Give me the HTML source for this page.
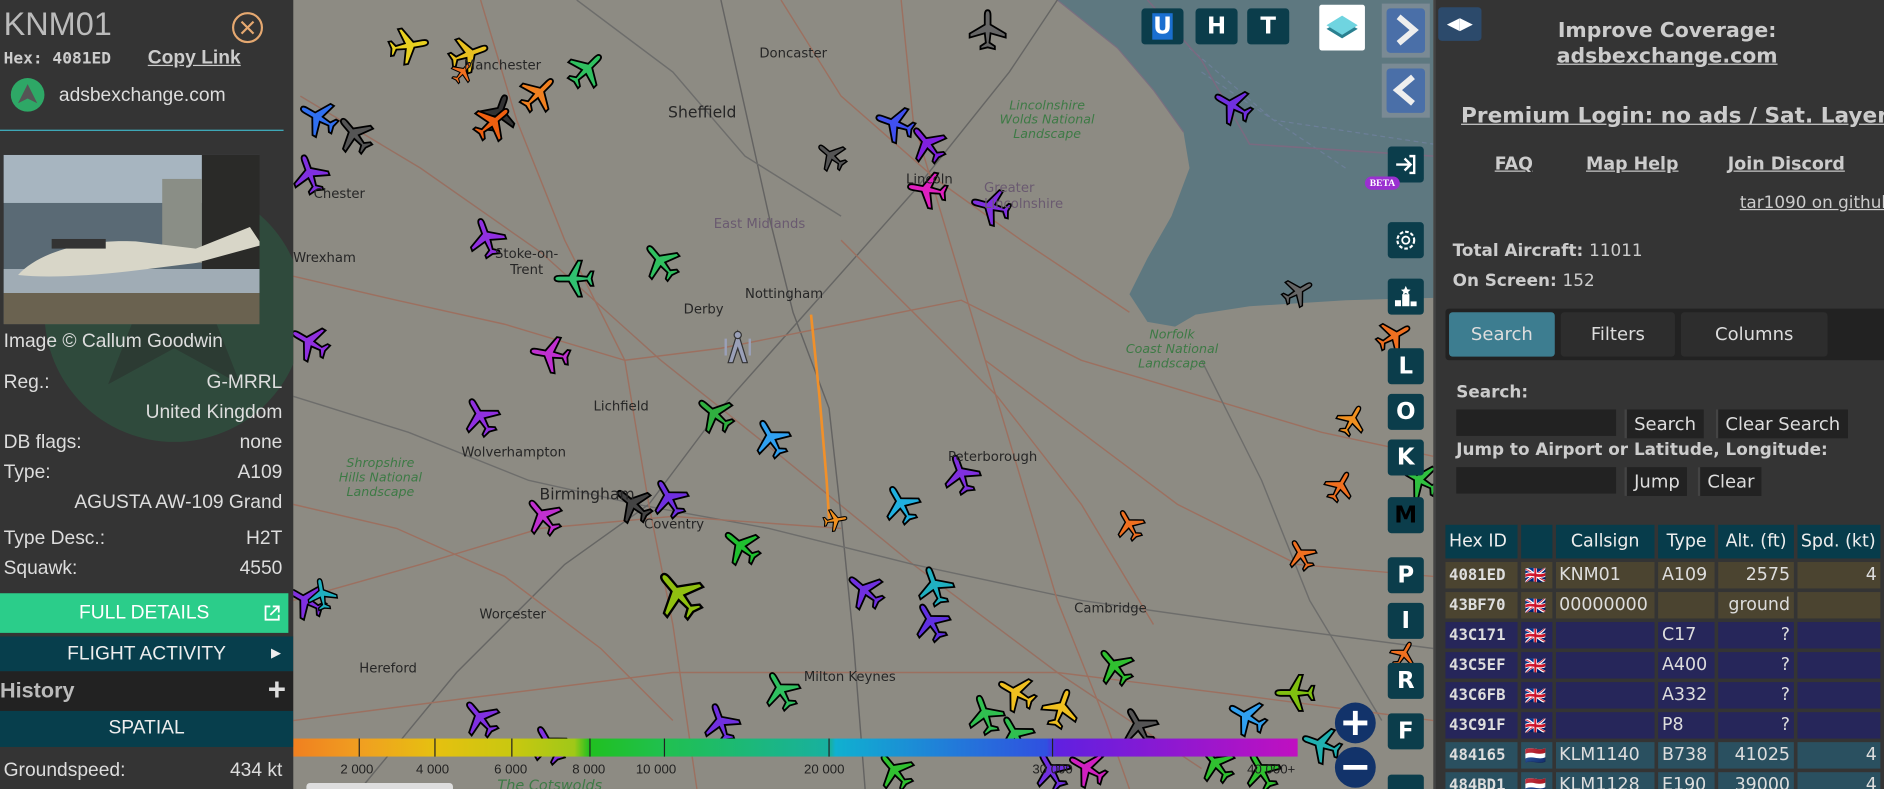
<!DOCTYPE html>
<html><head><meta charset="utf-8">
<style>
*{box-sizing:border-box;margin:0;padding:0}
html,body{width:1884px;height:789px;overflow:hidden;background:#333}
#w{position:absolute;left:0;top:0;width:1568px;height:657px;transform:scale(1.20153,1.2009);transform-origin:0 0;font-family:"Liberation Sans",Arial,sans-serif;overflow:hidden}
.abs{position:absolute}
#left{left:0;top:0;width:244px;height:657px;background:#343434;color:#ddd;overflow:hidden}
#map{left:244px;top:0;width:949px;height:657px;background:#8d8b83;overflow:hidden}
#right{left:1193px;top:0;width:375px;height:657px;background:#343434;color:#ccc;font-family:"DejaVu Sans",sans-serif;border-left:2px solid #444}
.row{position:absolute;left:3px;width:232px;font-size:16px;color:#ddd}
.row span{float:right}
.mb{position:absolute;width:30px;height:30px;background:#0b3d4b;border-radius:3px;color:#fff;font-weight:bold;font-size:19px;text-align:center;line-height:30px;font-family:"DejaVu Sans",sans-serif}
.bar{position:absolute;left:0;width:240px;color:#eee;text-align:center;font-size:16px}
.lbl{position:absolute;font-family:"DejaVu Sans",sans-serif;font-size:12px;color:#262626}
.grn{color:#3d7a45;font-style:italic;font-size:10.5px;text-align:center;line-height:12px}
table{border-collapse:separate;border-spacing:3px;font-size:14.5px;color:#ddd}
td,th{height:22px;padding:0 3px;white-space:nowrap}
th{background:#073c4b;font-weight:normal;color:#eee;height:28px}
.o td{background:#4b4430}.n td{background:#26265a}.t td{background:#2a5060}
.mono{font-family:"DejaVu Sans Mono",monospace;font-weight:bold;font-size:13px}
.btn{position:absolute;background:#222;color:#ddd;font-size:15px;height:24px;line-height:24px;padding:0 6px;border-left:2px solid #444}
.inp{position:absolute;background:#222;height:22px;width:133px}
</style></head><body><div id="w">

<!-- MAP -->
<div id="map" class="abs">
<svg width="949" height="657" viewBox="244 0 949 657" style="position:absolute;left:0;top:0">
<defs>
<g id="pl"><path transform="scale(1.5)" d="M12 1C13 1 13.6 2 13.6 4L13.6 9L22 14L22 16.2L13.6 13.8L13 19L16 21L16 22.6L12 21.6L8 22.6L8 21L11 19L10.4 13.8L2 16.2L2 14L10.4 9L10.4 4C10.4 2 11 1 12 1Z" stroke="#000" stroke-width="1"/></g>
</defs>
<path d="M880 0L1193 0L1193 248L1120 250L1040 255L995 262L978 272L955 268L940 245L955 215L975 180L990 140L985 110L960 75L930 40Z" fill="#5e7880"/>
<path d="M880 0L930 40L960 75L985 110" stroke="#7a6f80" fill="none" stroke-width="1"/>
<path d="M990 40L1060 100L1193 120M1000 60L1120 140" stroke="#6c7f98" fill="none" stroke-dasharray="4 3" stroke-width="1"/>
<path d="M955 0L1000 50L1040 120L1193 130" stroke="#7a6a80" fill="none" stroke-width="1.3"/>
<g fill="none" stroke-width="1.2" opacity=".8">
<path d="M250 80L350 140L450 210L550 300L650 380L760 470L880 560L1000 640" stroke="#9a6a5a"/>
<path d="M600 0L620 90L640 180L660 260L690 340L700 430L710 530L720 657" stroke="#5a5a5a"/>
<path d="M244 330L340 360L440 400L530 420L640 440L760 470L900 500L1040 520L1193 540" stroke="#666"/>
<path d="M300 657L380 560L470 470L540 420L600 340L680 250L760 160L840 60L880 0" stroke="#5d5d5d"/>
<path d="M244 230L330 250L420 270L520 300L600 290L700 270L800 250L900 300L1000 330L1100 360L1193 380" stroke="#a06a58"/>
<path d="M400 0L430 100L470 200L520 300L540 420L560 520L580 657" stroke="#a06a58"/>
<path d="M750 0L760 100L790 200L820 300L850 400L880 500L920 600L940 657" stroke="#a06a58"/>
<path d="M1000 300L1050 400L1090 500L1150 600" stroke="#666"/>
<path d="M244 500L350 470L450 440L560 430L700 440" stroke="#a06a58"/>
<path d="M650 0L700 80L780 150L850 200L940 260" stroke="#a06a58"/>
<path d="M244 600L400 580L560 560L720 560L880 560L1040 580L1193 600" stroke="#a06a58"/>
<path d="M480 0L560 60L620 130L700 180" stroke="#666"/>
<path d="M244 420L330 440L420 480L500 540L560 600" stroke="#a06a58"/>
<path d="M820 300L900 360L980 420L1080 470L1193 480" stroke="#a06a58"/>
<path d="M700 200L760 260L830 330L900 420L960 520" stroke="#a06a58"/>
</g>
<path d="M675 262L682 330L688 400L690 432" stroke="#f0902a" stroke-width="2.2" fill="none"/>
<!-- planes -->
<g>
<use href="#pl" fill="#e8d020" transform="translate(340,38) rotate(80) translate(-18,-18)"/>
<use href="#pl" fill="#e8c020" transform="translate(390,45) rotate(70) translate(-18,-18)"/>
<use href="#pl" fill="#f07020" transform="translate(385,60) rotate(40) scale(.6) translate(-18,-18)"/>
<use href="#pl" fill="#30c060" transform="translate(488,58) rotate(45) translate(-18,-18)"/>
<use href="#pl" fill="#f08020" transform="translate(448,78) rotate(45) translate(-18,-18)"/>
<use href="#pl" fill="#333" transform="translate(415,95) rotate(20) translate(-18,-18)"/>
<use href="#pl" fill="#f06010" transform="translate(410,102) rotate(50) translate(-18,-18)"/>
<use href="#pl" fill="#3070f0" transform="translate(265,98) rotate(-60) translate(-18,-18)"/>
<use href="#pl" fill="#555" transform="translate(295,112) rotate(-40) translate(-18,-18)"/>
<use href="#pl" fill="#8030e0" transform="translate(258,145) rotate(-20) translate(-18,-18)"/>
<use href="#pl" fill="#666" transform="translate(822,25) rotate(0) translate(-18,-18)"/>
<use href="#pl" fill="#7030e0" transform="translate(1026,88) rotate(-60) translate(-18,-18)"/>
<use href="#pl" fill="#4050f0" transform="translate(745,103) rotate(-70) translate(-18,-18)"/>
<use href="#pl" fill="#8020e0" transform="translate(772,120) rotate(-40) translate(-18,-18)"/>
<use href="#pl" fill="#555" transform="translate(692,130) rotate(-50) scale(.8) translate(-18,-18)"/>
<use href="#pl" fill="#e020c0" transform="translate(772,158) rotate(-80) translate(-18,-18)"/>
<use href="#pl" fill="#8030e0" transform="translate(825,172) rotate(-75) translate(-18,-18)"/>
<use href="#pl" fill="#9030e0" transform="translate(405,198) rotate(-20) translate(-18,-18)"/>
<use href="#pl" fill="#30c060" transform="translate(550,218) rotate(-40) translate(-18,-18)"/>
<use href="#pl" fill="#30c070" transform="translate(478,232) rotate(-90) translate(-18,-18)"/>
<use href="#pl" fill="#666" transform="translate(1080,243) rotate(60) scale(.8) translate(-18,-18)"/>
<use href="#pl" fill="#f07020" transform="translate(1160,280) rotate(60) scale(.9) translate(-18,-18)"/>
<use href="#pl" fill="#9030e0" transform="translate(258,285) rotate(-60) translate(-18,-18)"/>
<use href="#pl" fill="#c030d0" transform="translate(458,295) rotate(-80) translate(-18,-18)"/>
<use href="#pl" fill="#9030e0" transform="translate(400,347) rotate(-30) translate(-18,-18)"/>
<use href="#pl" fill="#30b040" transform="translate(595,345) rotate(-50) translate(-18,-18)"/>
<use href="#pl" fill="#30a0f0" transform="translate(642,365) rotate(-30) translate(-18,-18)"/>
<use href="#pl" fill="#8030e0" transform="translate(800,395) rotate(-20) translate(-18,-18)"/>
<use href="#pl" fill="#f09020" transform="translate(1125,350) rotate(30) scale(.8) translate(-18,-18)"/>
<use href="#pl" fill="#f07020" transform="translate(1115,405) rotate(30) scale(.8) translate(-18,-18)"/>
<use href="#pl" fill="#30c040" transform="translate(1182,400) rotate(-60) translate(-18,-18)"/>
<use href="#pl" fill="#f07020" transform="translate(940,437) rotate(-30) scale(.8) translate(-18,-18)"/>
<use href="#pl" fill="#f07020" transform="translate(1083,462) rotate(-30) scale(.8) translate(-18,-18)"/>
<use href="#pl" fill="#444" transform="translate(527,420) rotate(-50) translate(-18,-18)"/>
<use href="#pl" fill="#7030e0" transform="translate(557,415) rotate(-30) translate(-18,-18)"/>
<use href="#pl" fill="#c030d0" transform="translate(452,430) rotate(-40) translate(-18,-18)"/>
<use href="#pl" fill="#20b0e0" transform="translate(750,420) rotate(-30) translate(-18,-18)"/>
<use href="#pl" fill="#f09020" transform="translate(695,433) rotate(80) scale(.6) translate(-18,-18)"/>
<use href="#pl" fill="#20c030" transform="translate(617,455) rotate(-50) translate(-18,-18)"/>
<use href="#pl" fill="#90c010" transform="translate(565,495) rotate(-40) scale(1.3) translate(-18,-18)"/>
<use href="#pl" fill="#7030e0" transform="translate(720,492) rotate(-50) translate(-18,-18)"/>
<use href="#pl" fill="#20b0c0" transform="translate(778,488) rotate(-20) translate(-18,-18)"/>
<use href="#pl" fill="#6030e0" transform="translate(775,518) rotate(-30) translate(-18,-18)"/>
<use href="#pl" fill="#8030e0" transform="translate(255,500) rotate(-60) translate(-18,-18)"/>
<use href="#pl" fill="#20b0c0" transform="translate(268,495) rotate(-10) scale(.8) translate(-18,-18)"/>
<use href="#pl" fill="#30c030" transform="translate(928,555) rotate(-40) translate(-18,-18)"/>
<use href="#pl" fill="#f07020" transform="translate(1168,545) rotate(30) scale(.7) translate(-18,-18)"/>
<use href="#pl" fill="#80c010" transform="translate(1078,577) rotate(-90) translate(-18,-18)"/>
<use href="#pl" fill="#30a0f0" transform="translate(1038,597) rotate(-60) translate(-18,-18)"/>
<use href="#pl" fill="#20b0b0" transform="translate(1100,620) rotate(-70) translate(-18,-18)"/>
<use href="#pl" fill="#30c060" transform="translate(650,575) rotate(-30) translate(-18,-18)"/>
<use href="#pl" fill="#f0c020" transform="translate(846,577) rotate(-60) translate(-18,-18)"/>
<use href="#pl" fill="#f0c020" transform="translate(883,590) rotate(20) translate(-18,-18)"/>
<use href="#pl" fill="#30c050" transform="translate(820,595) rotate(-20) translate(-18,-18)"/>
<use href="#pl" fill="#30c050" transform="translate(845,612) rotate(-30) translate(-18,-18)"/>
<use href="#pl" fill="#555" transform="translate(948,605) rotate(-30) translate(-18,-18)"/>
<use href="#pl" fill="#8030e0" transform="translate(400,598) rotate(-40) translate(-18,-18)"/>
<use href="#pl" fill="#8030e0" transform="translate(457,620) rotate(-30) translate(-18,-18)"/>
<use href="#pl" fill="#7030e0" transform="translate(600,602) rotate(-20) translate(-18,-18)"/>
<use href="#pl" fill="#d020c0" transform="translate(905,640) rotate(-60) translate(-18,-18)"/>
<use href="#pl" fill="#7030e0" transform="translate(875,642) rotate(-30) translate(-18,-18)"/>
<use href="#pl" fill="#30c030" transform="translate(745,642) rotate(-40) translate(-18,-18)"/>
<use href="#pl" fill="#30c030" transform="translate(1012,636) rotate(-40) translate(-18,-18)"/>
<use href="#pl" fill="#30c030" transform="translate(1050,642) rotate(-30) translate(-18,-18)"/>
</g>
<g stroke="#333" fill="#9aa0b8" stroke-width="1"><path d="M614 276L606 302L610 302L614 290L618 302L622 302Z"/><circle cx="614" cy="279" r="3"/><path d="M604 282V296M624 282V296" stroke="#9aa0b8" stroke-width="2"/></g>
<!-- color bar -->
<defs><linearGradient id="cb" x1="244" x2="1080" gradientUnits="userSpaceOnUse">
<stop offset="0" stop-color="#f08020"/><stop offset=".07" stop-color="#f0a020"/><stop offset=".14" stop-color="#e6c010"/><stop offset=".22" stop-color="#c8c810"/><stop offset=".28" stop-color="#a0c818"/><stop offset=".295" stop-color="#20c020"/><stop offset=".37" stop-color="#20c050"/><stop offset=".535" stop-color="#18b0a0"/><stop offset=".54" stop-color="#10b0d0"/><stop offset=".75" stop-color="#3050e0"/><stop offset=".76" stop-color="#6020e0"/><stop offset="1" stop-color="#c010c0"/></linearGradient></defs>
<rect x="244" y="615" width="836" height="15" fill="url(#cb)"/>
<g stroke="#222" stroke-width="1"><path d="M299 615V630M362 615V630M426 615V630M491 615V630M553 615V630M690 615V630M876 615V630"/></g>
<g font-family="Liberation Sans Narrow,Liberation Sans,sans-serif" font-size="11" fill="#222" text-anchor="middle"><text x="297" y="644">2 000</text><text x="360" y="644">4 000</text><text x="425" y="644">6 000</text><text x="490" y="644">8 000</text><text x="546" y="644">10 000</text><text x="686" y="644">20 000</text><text x="876" y="644">30 000</text><text x="1058" y="644">40 000+</text></g>
<rect x="255" y="652" width="122" height="10" rx="3" fill="#ddd"/>
</svg>
<div class="lbl" style="left:312px;top:87px;font-size:13px">Sheffield</div>
<div class="lbl" style="left:388px;top:38px;font-size:11px">Doncaster</div>
<div class="lbl" style="left:376px;top:238px;font-size:11px">Nottingham</div>
<div class="lbl" style="left:325px;top:251px;font-size:11px">Derby</div>
<div class="lbl" style="left:350px;top:180px;font-size:11px;color:#6a5a70">East Midlands</div>
<div class="lbl" style="left:545px;top:374px;font-size:11px">Peterborough</div>
<div class="lbl" style="left:205px;top:405px;font-size:13px">Birmingham</div>
<div class="lbl" style="left:292px;top:430px;font-size:11px">Coventry</div>
<div class="lbl" style="left:140px;top:370px;font-size:11px">Wolverhampton</div>
<div class="lbl" style="left:250px;top:332px;font-size:11px">Lichfield</div>
<div class="lbl" style="left:168px;top:205px;font-size:11px;text-align:center;line-height:13px">Stoke-on-<br>Trent</div>
<div class="lbl" style="left:155px;top:505px;font-size:11px">Worcester</div>
<div class="lbl" style="left:55px;top:550px;font-size:11px">Hereford</div>
<div class="lbl" style="left:425px;top:557px;font-size:11px">Milton Keynes</div>
<div class="lbl" style="left:650px;top:500px;font-size:11px">Cambridge</div>
<div class="lbl" style="left:17px;top:155px;font-size:11px">Chester</div>
<div class="lbl" style="left:0px;top:208px;font-size:11px">Wrexham</div>
<div class="lbl" style="left:510px;top:143px;font-size:11px">Lincoln</div>
<div class="lbl" style="left:142px;top:48px;font-size:11px">Manchester</div>
<div class="lbl" style="left:575px;top:150px;font-size:11px;color:#6a5a70">Greater<br>Lincolnshire</div>
<div class="lbl grn" style="left:588px;top:82px">Lincolnshire<br>Wolds National<br>Landscape</div>
<div class="lbl grn" style="left:693px;top:273px">Norfolk<br>Coast National<br>Landscape</div>
<div class="lbl grn" style="left:38px;top:380px">Shropshire<br>Hills National<br>Landscape</div>
<div class="lbl grn" style="left:170px;top:648px;font-size:12px">The Cotswolds</div>
<!-- map buttons -->
<div class="mb" style="left:706px;top:7px;width:35px"><span style="background:#1a6fd0;padding:0 1px">U</span></div>
<div class="mb" style="left:751px;top:7px;width:35px">H</div>
<div class="mb" style="left:794px;top:7px;width:35px">T</div>
<div class="abs" style="left:854px;top:4px;width:38px;height:38px;background:#fff;border-radius:2px"><svg width="38" height="38"><path d="M6 20L19 28L32 20L19 13Z" fill="#2a8090"/><path d="M6 17L19 25L32 17L19 9Z" fill="#6fd4e0"/></svg></div>
<div class="abs" style="left:906px;top:3px;width:40px;height:45px;background:#7a8a94;padding:4px"><div style="background:#4a6fa8;height:37px;border-radius:3px"><svg width="32" height="37"><path d="M10 7L23 18L10 29" stroke="#eee" stroke-width="5" fill="none"/></svg></div></div>
<div class="abs" style="left:906px;top:53px;width:40px;height:45px;background:#7a8a94;padding:4px"><div style="background:#4a6fa8;height:37px;border-radius:3px"><svg width="32" height="37"><path d="M22 7L9 18L22 29" stroke="#eee" stroke-width="5" fill="none"/></svg></div></div>
<div class="mb" style="left:911px;top:122px;width:30px"><svg width="30" height="30"><path d="M7 15H18M14 10L19 15L14 20M18 8H22V22H18" stroke="#fff" stroke-width="2" fill="none"/></svg></div>
<div class="abs" style="left:892px;top:147px;background:#9a30d0;color:#fff;font-family:'Liberation Serif',serif;font-weight:bold;font-size:8px;padding:1px 4px;border-radius:7px">BETA</div>
<div class="mb" style="left:911px;top:185px"><svg width="30" height="30"><circle cx="15" cy="15" r="7" stroke="#fff" stroke-width="1.8" fill="none" stroke-dasharray="3 1.6"/><circle cx="15" cy="15" r="3" stroke="#fff" stroke-width="1.5" fill="none"/></svg></div>
<div class="mb" style="left:911px;top:232px"><svg width="30" height="30"><rect x="6" y="18" width="5" height="5" fill="#fff"/><rect x="12" y="13" width="6" height="10" fill="#fff"/><rect x="19" y="19" width="5" height="4" fill="#fff"/><path d="M15 6L16.3 9L19 9.3L17 11L17.5 13.5L15 12L12.5 13.5L13 11L11 9.3L13.7 9Z" fill="#fff"/></svg></div>
<div class="mb" style="left:911px;top:290px">L</div>
<div class="mb" style="left:911px;top:328px">O</div>
<div class="mb" style="left:911px;top:366px">K</div>
<div class="mb" style="left:911px;top:414px;color:#000">M</div>
<div class="mb" style="left:911px;top:464px">P</div>
<div class="mb" style="left:911px;top:502px">I</div>
<div class="mb" style="left:911px;top:552px">R</div>
<div class="mb" style="left:911px;top:594px">F</div>
<div class="mb" style="left:911px;top:645px"></div>
<svg class="abs" style="left:866px;top:584px" width="36" height="74"><circle cx="18" cy="18" r="17" fill="#12336a"/><path d="M8 18H28M18 8V28" stroke="#fff" stroke-width="4"/><circle cx="18" cy="55" r="17" fill="#12336a"/><path d="M8 55H28" stroke="#fff" stroke-width="4"/></svg>
</div>

<!-- LEFT PANEL -->
<div id="left" class="abs">
<svg class="abs" style="left:30px;top:150px" width="230" height="230"><circle cx="115" cy="110" r="108" fill="#2f4a3c"/><path d="M115 30L60 170L115 140L170 170Z" fill="#2c3b33"/></svg>
<div class="abs" style="left:3px;top:5px;font-size:27px;color:#bbb">KNM01</div>
<svg class="abs" style="left:192px;top:9px" width="28" height="28"><circle cx="14" cy="14" r="12" stroke="#e5a870" stroke-width="1.8" fill="none"/><path d="M9 9L19 19M19 9L9 19" stroke="#e5a870" stroke-width="1.8"/></svg>
<div class="abs mono" style="left:3px;top:41px;color:#ccc;font-size:13.5px">Hex: 4081ED</div>
<div class="abs" style="left:123px;top:40px;font-size:16px;font-weight:bold;color:#ccc;text-decoration:underline">Copy Link</div>
<svg class="abs" style="left:8px;top:64px" width="30" height="30"><circle cx="15" cy="15" r="14" fill="#2ea866"/><path d="M15 6L7 22L15 18L23 22Z" fill="#555"/></svg>
<div class="abs" style="left:49px;top:71px;font-size:16px;color:#ddd">adsbexchange.com</div>
<div class="abs" style="left:0;top:108px;width:236px;height:1px;background:#3fb6c6"></div>
<svg class="abs" style="left:3px;top:129px" width="213" height="141"><rect width="213" height="141" fill="#5a6a75"/><rect width="213" height="40" fill="#a7b5c0"/><rect x="165" y="0" width="48" height="110" fill="#2a2a28"/><rect x="132" y="20" width="33" height="70" fill="#8a8e86"/><rect x="0" y="95" width="213" height="20" fill="#a0acb5"/><rect x="0" y="115" width="213" height="26" fill="#6a6250"/><path d="M12 100C30 80 70 70 110 72L160 78L205 60L215 75L160 90L120 95C80 100 40 103 12 100Z" fill="#d8d6c8"/><rect x="40" y="70" width="45" height="8" fill="#333"/></svg>
<div class="abs" style="left:3px;top:276px;font-size:16px;color:#ddd">Image © Callum Goodwin</div>
<div class="row" style="top:310px">Reg.:<span>G-MRRL</span></div>
<div class="row" style="top:335px"><span>United Kingdom</span></div>
<div class="row" style="top:360px">DB flags:<span>none</span></div>
<div class="row" style="top:385px">Type:<span>A109</span></div>
<div class="row" style="top:410px"><span>AGUSTA AW-109 Grand</span></div>
<div class="row" style="top:440px">Type Desc.:<span>H2T</span></div>
<div class="row" style="top:465px">Squawk:<span>4550</span></div>
<div class="bar" style="top:494px;height:33px;line-height:33px;background:#2bcd8a;color:#fff">FULL DETAILS<svg class="abs" style="right:6px;top:9px" width="15" height="15"><path d="M6 2H2V13H13V9M8 2H13V7M13 2L6 9" stroke="#fff" stroke-width="1.5" fill="none"/></svg></div>
<div class="bar" style="top:530px;height:29px;line-height:29px;background:#073e4c;width:244px">FLIGHT ACTIVITY<span class="abs" style="right:10px;top:0;font-size:11px">▶</span></div>
<div class="abs" style="left:0;top:559px;width:244px;height:33px;background:#222;color:#bbb;font-weight:bold;font-size:18px;line-height:33px">History<span class="abs" style="right:6px;top:-1px;font-size:26px;color:#ddd">+</span></div>
<div class="bar" style="top:592px;height:30px;line-height:30px;background:#073e4c;width:244px">SPATIAL</div>
<div class="row" style="top:633px">Groundspeed:<span>434 kt</span></div>
</div>

<!-- RIGHT PANEL -->
<div id="right" class="abs">
<div class="abs" style="left:2px;top:6px;width:36px;height:28px;background:#2c4a6b;border-radius:3px;color:#fff;font-size:14px;text-align:center;line-height:28px">◀▶</div>
<div class="abs" style="left:40px;top:16px;width:305px;text-align:center;font-weight:bold;font-size:17px;line-height:21px;color:#ccc">Improve Coverage:<br><u>adsbexchange.com</u></div>
<div class="abs" style="left:21px;top:86px;font-weight:bold;font-size:18px;color:#ccc;white-space:nowrap"><u>Premium Login: no ads / Sat. Layer</u></div>
<div class="abs" style="left:49px;top:129px;font-weight:bold;font-size:14.5px"><u>FAQ</u></div>
<div class="abs" style="left:125px;top:129px;font-weight:bold;font-size:14.5px"><u>Map Help</u></div>
<div class="abs" style="left:243px;top:129px;font-weight:bold;font-size:14.5px"><u>Join Discord</u></div>
<div class="abs" style="left:253px;top:161px;font-size:14px;white-space:nowrap"><u>tar1090 on github</u></div>
<div class="abs" style="left:14px;top:201px;font-weight:bold;font-size:14px">Total Aircraft: <span style="font-weight:normal">11011</span></div>
<div class="abs" style="left:14px;top:226px;font-weight:bold;font-size:14px">On Screen: <span style="font-weight:normal">152</span></div>
<div class="abs" style="left:8px;top:257px;width:370px;height:43px;background:#222;border-radius:3px"></div>
<div class="abs" style="left:11px;top:260px;width:88px;height:37px;background:#3d7d90;border-radius:3px;text-align:center;line-height:37px;font-size:15px;color:#ddd">Search</div>
<div class="abs" style="left:104px;top:260px;width:95px;height:37px;background:#2d2d2d;border-radius:3px;text-align:center;line-height:37px;font-size:15px;color:#ddd">Filters</div>
<div class="abs" style="left:204px;top:260px;width:122px;height:37px;background:#2d2d2d;border-radius:3px;text-align:center;line-height:37px;font-size:15px;color:#ddd">Columns</div>
<div class="abs" style="left:17px;top:319px;font-weight:bold;font-size:14px">Search:</div>
<div class="inp" style="left:17px;top:341px"></div>
<div class="btn" style="left:157px;top:341px">Search</div>
<div class="btn" style="left:233px;top:341px">Clear Search</div>
<div class="abs" style="left:17px;top:367px;font-weight:bold;font-size:14px;white-space:nowrap">Jump to Airport or Latitude, Longitude:</div>
<div class="inp" style="left:17px;top:389px"></div>
<div class="btn" style="left:157px;top:389px">Jump</div>
<div class="btn" style="left:218px;top:389px">Clear</div>
<table class="abs" style="left:5px;top:434px">
<tr><th style="width:65px;text-align:left">Hex ID</th><th style="width:27px"></th><th style="width:85px">Callsign</th><th style="width:50px">Type</th><th style="width:67px">Alt. (ft)</th><th style="width:70px;text-align:left">Spd. (kt)</th></tr>
<tr class="o"><td class="mono">4081ED</td><td>🇬🇧</td><td>KNM01</td><td>A109</td><td align="right">2575</td><td align="right">4</td></tr>
<tr class="o"><td class="mono">43BF70</td><td>🇬🇧</td><td>00000000</td><td></td><td align="right">ground</td><td></td></tr>
<tr class="n"><td class="mono">43C171</td><td>🇬🇧</td><td></td><td>C17</td><td align="right">?</td><td></td></tr>
<tr class="n"><td class="mono">43C5EF</td><td>🇬🇧</td><td></td><td>A400</td><td align="right">?</td><td></td></tr>
<tr class="n"><td class="mono">43C6FB</td><td>🇬🇧</td><td></td><td>A332</td><td align="right">?</td><td></td></tr>
<tr class="n"><td class="mono">43C91F</td><td>🇬🇧</td><td></td><td>P8</td><td align="right">?</td><td></td></tr>
<tr class="t"><td class="mono">484165</td><td>🇳🇱</td><td>KLM1140</td><td>B738</td><td align="right">41025</td><td align="right">4</td></tr>
<tr class="t"><td class="mono">484BD1</td><td>🇳🇱</td><td>KLM1128</td><td>E190</td><td align="right">39000</td><td align="right">4</td></tr>
</table>
</div>
</div></body></html>
